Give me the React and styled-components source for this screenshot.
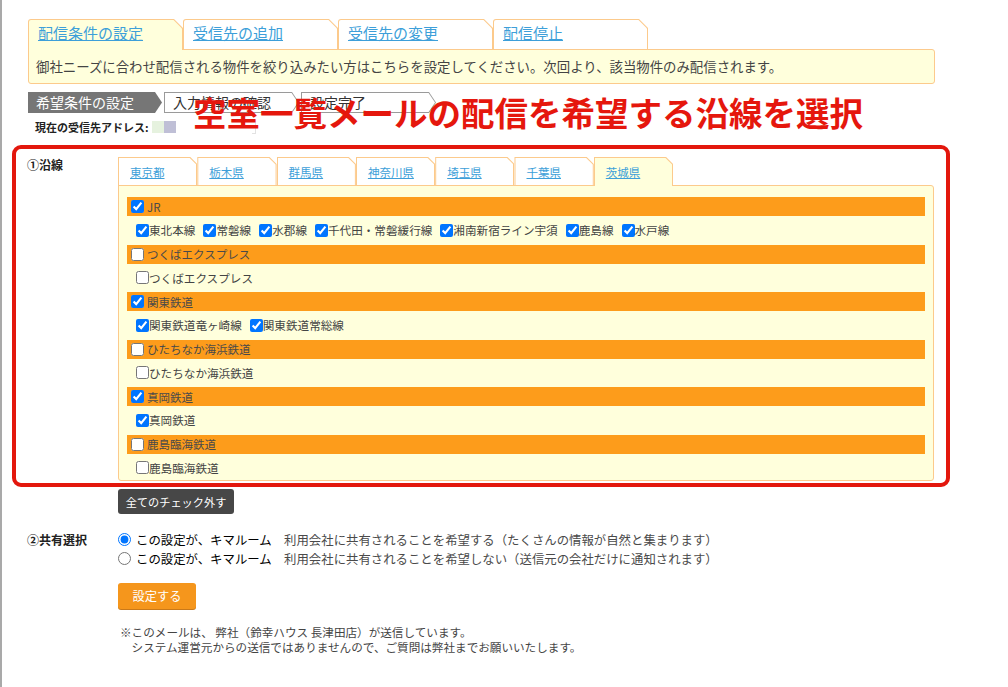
import React from 'react'
import styled, { createGlobalStyle } from 'styled-components'

const GlobalStyle = createGlobalStyle`
  html, body {
    margin: 0;
    padding: 0;
    background: #fff;
  }
  body {
    font-family: "Noto Sans CJK JP", "Noto Sans", sans-serif;
    color: #333;
  }
  * {
    box-sizing: border-box;
  }
`

const topTabs = ['配信条件の設定', '受信先の追加', '受信先の変更', '配信停止']
const prefs = ['東京都', '栃木県', '群馬県', '神奈川県', '埼玉県', '千葉県', '茨城県']

const lines = [
    { name: 'JR', checked: true, items: [
        ['東北本線', true], ['常磐線', true], ['水郡線', true], ['千代田・常磐緩行線', true],
        ['湘南新宿ライン宇須', true], ['鹿島線', true], ['水戸線', true],
    ] },
    { name: 'つくばエクスプレス', checked: false, items: [['つくばエクスプレス', false]] },
    { name: '関東鉄道', checked: true, items: [['関東鉄道竜ヶ崎線', true], ['関東鉄道常総線', true]] },
    { name: 'ひたちなか海浜鉄道', checked: false, items: [['ひたちなか海浜鉄道', false]] },
    { name: '真岡鉄道', checked: true, items: [['真岡鉄道', true]] },
    { name: '鹿島臨海鉄道', checked: false, items: [['鹿島臨海鉄道', false]] },
]

export default function App() {
    return (
        <>
            <GlobalStyle />
            <Page>
                <TopTabs>
                    {topTabs.map((t, i) => (
                        <TopTab key={t} active={i === 0}>
                            <TopTabInner active={i === 0}>
                                <TabLink href="#">{t}</TabLink>
                            </TopTabInner>
                        </TopTab>
                    ))}
                </TopTabs>
                <InfoBox>
                    御社ニーズに合わせ配信される物件を絞り込みたい方はこちらを設定してください。次回より、該当物件のみ配信されます。
                </InfoBox>

                <Steps>
                    <StepCurrent>希望条件の設定</StepCurrent>
                    <StepOuter><StepInner>入力情報の確認</StepInner></StepOuter>
                    <StepOuter><StepInner>設定完了</StepInner></StepOuter>
                </Steps>

                <AddressRow>
                    <AddressLabel>現在の受信先アドレス:</AddressLabel>
                    <Redact color="#e6f2df" />
                    <Redact color="#bfbfd6" />
                    <RedactEnd />
                </AddressRow>

                <FormRow first>
                    <FormLabel>①沿線</FormLabel>
                    <FormBody>
                        <PrefTabs>
                            {prefs.map((p, i) => (
                                <PrefTab key={p} active={i === prefs.length - 1}>
                                    <PrefTabInner active={i === prefs.length - 1}>
                                        <PrefLink href="#">{p}</PrefLink>
                                    </PrefTabInner>
                                </PrefTab>
                            ))}
                        </PrefTabs>
                        <Panel>
                            {lines.map(line => (
                                <div key={line.name}>
                                    <CompanyRow>
                                        <Check type="checkbox" defaultChecked={line.checked} />
                                        <CompanyName>{line.name}</CompanyName>
                                    </CompanyRow>
                                    <LineRow>
                                        {line.items.map(([name, on]) => (
                                            <LineItem key={name}>
                                                <Check type="checkbox" defaultChecked={on} />
                                                {name}
                                            </LineItem>
                                        ))}
                                    </LineRow>
                                </div>
                            ))}
                        </Panel>
                        <DarkButton>全てのチェック外す</DarkButton>
                    </FormBody>
                </FormRow>

                <FormRow>
                    <FormLabel>②共有選択</FormLabel>
                    <FormBody>
                        <RadioLine>
                            <Radio type="radio" name="share" defaultChecked />
                            <Strong>この設定が、キマルーム</Strong>　利用会社に共有されることを希望する（たくさんの情報が自然と集まります）
                        </RadioLine>
                        <RadioLine>
                            <Radio type="radio" name="share" />
                            <Strong>この設定が、キマルーム</Strong>　利用会社に共有されることを希望しない（送信元の会社だけに通知されます）
                        </RadioLine>
                        <SubmitButton>設定する</SubmitButton>
                    </FormBody>
                </FormRow>

                <Note>
                    <div>※このメールは、 弊社（鈴幸ハウス 長津田店）が送信しています。</div>
                    <div>　システム運営元からの送信ではありませんので、ご質問は弊社までお願いいたします。</div>
                </Note>

                <Annotation>空室一覧メールの配信を希望する沿線を選択</Annotation>
                <RedFrame />
            </Page>
        </>
    )
}

const Page = styled.div`
    position: relative;
    min-height: 687px;
    border-left: 2px solid #a9a9a9;
    padding: 19px 73px 0 26px;
`

const TopTabs = styled.div`
    display: flex;
    height: 31px;
    margin-bottom: -1px;
    position: relative;
    z-index: 1;
`

const TopTab = styled.div`
    width: 155px;
    height: 31px;
    background: #fcca8c;
    padding: 1px 1px ${p => p.active ? '0' : '1px'} 1px;
    border-radius: 3px 0 0 0;
    clip-path: polygon(0 0, calc(100% - 9px) 0, 100% 9px, 100% 100%, 0 100%);
`

const TopTabInner = styled.div`
    height: 100%;
    background: ${p => p.active ? '#ffffdc' : '#fff'};
    border-radius: 2px 0 0 0;
    clip-path: polygon(0 0, calc(100% - 8.5px) 0, 100% 8.5px, 100% 100%, 0 100%);
    padding-left: 9px;
`

const TabLink = styled.a`
    font-size: 15px;
    line-height: 25px;
    color: #3d9fd9;
    text-decoration: underline;
`

const InfoBox = styled.div`
    height: 35px;
    background: #ffffdc;
    border: 1px solid #fcca8c;
    border-radius: 0 3px 3px 3px;
    padding: 0 7px;
    font-size: 13.4px;
    line-height: 33px;
    color: #444;
    white-space: nowrap;
`

const Steps = styled.div`
    display: flex;
    gap: 2px;
    margin-top: 8px;
    height: 21px;
`

const arrow = 'polygon(0 0, calc(100% - 7px) 0, 100% 50%, calc(100% - 7px) 100%, 0 100%)'

const StepCurrent = styled.div`
    width: 134px;
    height: 21px;
    background: #767676;
    color: #fff;
    font-size: 14px;
    line-height: 21px;
    padding-left: 8px;
    clip-path: ${arrow};
`

const StepOuter = styled.div`
    width: 135px;
    height: 21px;
    padding: 1px;
    background: #9a9a9a;
    clip-path: ${arrow};
`

const StepInner = styled.div`
    height: 100%;
    background: #fff;
    color: #333;
    font-size: 14px;
    line-height: 19px;
    padding-left: 8px;
    clip-path: polygon(0 0, calc(100% - 6.4px) 0, 100% 50%, calc(100% - 6.4px) 100%, 0 100%);
`

const AddressRow = styled.div`
    display: flex;
    align-items: center;
    height: 14px;
    margin-top: 7px;
    padding-left: 7px;
`

const AddressLabel = styled.span`
    font-size: 11px;
    font-weight: 700;
    color: #222;
    margin-right: 3px;
`

const Redact = styled.span`
    width: 12px;
    height: 12px;
    background: ${p => p.color};
`

const RedactEnd = styled.span`
    width: 4px;
    height: 14px;
    margin-left: 76px;
    border: 1px solid #e2e2e2;
    border-left: none;
`

const FormRow = styled.div`
    display: flex;
    margin-top: ${p => p.first ? '21px' : '16px'};
`

const FormLabel = styled.div`
    width: 91px;
    margin-left: -1px;
    font-size: 12px;
    font-weight: 700;
    line-height: 19px;
    color: #222;
    flex-shrink: 0;
`

const FormBody = styled.div`
    flex: 1;
`

const PrefTabs = styled.div`
    display: flex;
    height: 29px;
    margin-top: 2px;
    margin-bottom: -1px;
    position: relative;
    z-index: 1;
`

const PrefTab = styled.div`
    width: 79.3px;
    height: 29px;
    background: #fcca8c;
    padding: 1px 1px ${p => p.active ? '0' : '1px'} 1px;
    clip-path: polygon(0 0, calc(100% - 7px) 0, 100% 7px, 100% 100%, 0 100%);
`

const PrefTabInner = styled.div`
    height: 100%;
    background: ${p => p.active ? '#ffffdc' : '#fff'};
    clip-path: polygon(0 0, calc(100% - 6.6px) 0, 100% 6.6px, 100% 100%, 0 100%);
    padding-left: 11px;
`

const PrefLink = styled.a`
    font-size: 11.5px;
    line-height: 27px;
    color: #3d9fd9;
    text-decoration: underline;
    white-space: nowrap;
`

const Panel = styled.div`
    width: 816px;
    height: 296px;
    background: #ffffdc;
    border: 1px solid #fcca8c;
    border-radius: 0 3px 3px 3px;
    padding: 11px 8px 0 8px;
`

const CompanyRow = styled.div`
    display: flex;
    align-items: center;
    gap: 3px;
    height: 19px;
    padding-left: 4px;
    background: #fd9c1b;
`

const CompanyName = styled.span`
    font-size: 11.5px;
    color: #4a4a4a;
`

const LineRow = styled.div`
    display: flex;
    align-items: center;
    gap: 8px;
    height: 28.5px;
    padding-left: 9px;
`

const LineItem = styled.label`
    display: flex;
    align-items: center;
    font-size: 11.6px;
    color: #444;
    white-space: nowrap;
`

const Check = styled.input`
    width: 13px;
    height: 13px;
    margin: 0;
    accent-color: #0075ff;
`

const DarkButton = styled.button`
    display: block;
    margin-top: 8px;
    width: 116px;
    height: 25px;
    border: none;
    border-radius: 3px;
    background: #474747;
    color: #fff;
    font-family: inherit;
    font-size: 11.2px;
    padding: 0;
`

const RadioLine = styled.label`
    display: flex;
    align-items: center;
    height: 19px;
    font-size: 12.4px;
    color: #4a4a4a;
    white-space: nowrap;
`

const Strong = styled.span`
    color: #000;
`

const Radio = styled.input`
    width: 13px;
    height: 13px;
    margin: 0 5px 0 0;
`

const SubmitButton = styled.button`
    display: block;
    margin-top: 15px;
    width: 78px;
    height: 26px;
    border: none;
    border-radius: 3px;
    background: #f5961c;
    box-shadow: 0 1px 0 #c9791a;
    color: #fff;
    font-family: inherit;
    font-size: 12.3px;
    padding: 0;
`

const Note = styled.div`
    margin-top: 16px;
    padding-left: 92px;
    font-size: 11.6px;
    line-height: 15px;
    color: #444;
    white-space: nowrap;
`

const Annotation = styled.div`
    position: absolute;
    left: 191px;
    top: 95px;
    font-size: 33.5px;
    font-weight: 700;
    line-height: 1;
    color: #e5170d;
    white-space: nowrap;
    pointer-events: none;
`

const RedFrame = styled.div`
    position: absolute;
    left: 10px;
    top: 145px;
    width: 938px;
    height: 342px;
    border: 4px solid #e3170d;
    border-radius: 9px;
    pointer-events: none;
`
